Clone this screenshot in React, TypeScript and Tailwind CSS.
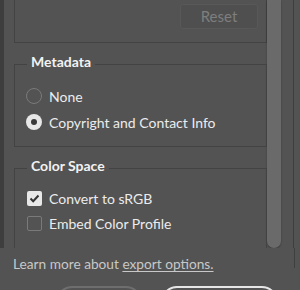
import React from "react";

function Radio({ checked }: { checked?: boolean }) {
  return checked ? (
    <span className="w-[16px] h-[16px] rounded-full bg-[#e8e8e8] flex items-center justify-center shrink-0">
      <span className="w-[6px] h-[6px] rounded-full bg-[#3a3a3a]" />
    </span>
  ) : (
    <span className="w-[16px] h-[16px] rounded-full border border-[#7a7a7a] shrink-0" />
  );
}

function Check({ checked }: { checked?: boolean }) {
  return checked ? (
    <span className="w-[15px] h-[15px] rounded-[2px] bg-[#e8e8e8] flex items-center justify-center shrink-0">
      <svg width="11" height="9" viewBox="0 0 11 9">
        <path d="M1.5 4.5 L4.2 7.2 L9.5 1.5" fill="none" stroke="#333" strokeWidth="2" />
      </svg>
    </span>
  ) : (
    <span className="w-[15px] h-[15px] rounded-[2px] border border-[#7a7a7a] shrink-0" />
  );
}

function Legend({ children }: { children: React.ReactNode }) {
  return (
    <span className="absolute top-[-13px] left-[12px] px-[4px] bg-[#535353] text-[14px] font-bold leading-[20px] text-[#f2f2f2]">
      {children}
    </span>
  );
}

export default function App() {
  return (
    <div
      className="w-[300px] h-[290px] bg-[#535353] overflow-hidden flex flex-col text-[#ececec]"
      style={{ fontFamily: 'Lato, "Noto Sans", sans-serif' }}
    >
      <div className="h-[248px] flex shrink-0 overflow-hidden">
        <div className="w-[4px] bg-[#3e3e3e] shrink-0" />
        <div className="w-[10px] shrink-0" />
        <div className="w-[253px] shrink-0 flex flex-col">
          <div className="h-[43px] shrink-0 border-x border-b border-[#434343] flex justify-end pr-[8px] pt-[4px]">
            <button className="w-[78px] h-[25px] rounded-[3px] bg-[#4f4f4f] border border-[#585858] text-[15px] text-[#7e7e7e] leading-none">
              Reset
            </button>
          </div>
          <div className="relative mt-[21px] shrink-0 h-[83px] border border-[#434343] pl-[11px] pt-[23px]">
            <Legend>Metadata</Legend>
            <div className="flex flex-col gap-[10px]">
              <label className="flex items-center gap-[7px] h-[16px] text-[14px]">
                <Radio />
                <span>None</span>
              </label>
              <label className="flex items-center gap-[7px] h-[16px] text-[14px]">
                <Radio checked />
                <span>Copyright and Contact Info</span>
              </label>
            </div>
          </div>
          <div className="relative mt-[21px] shrink-0 h-[110px] border border-[#434343] pl-[12px] pt-[22px]">
            <Legend>Color Space</Legend>
            <div className="flex flex-col gap-[10px]">
              <label className="flex items-center gap-[7px] h-[15px] text-[14px]">
                <Check checked />
                <span>Convert to sRGB</span>
              </label>
              <label className="flex items-center gap-[7px] h-[15px] text-[14px]">
                <Check />
                <span>Embed Color Profile</span>
              </label>
            </div>
          </div>
        </div>
        <div className="w-[14px] shrink-0 h-[248px] rounded-b-[7px] bg-[#6a6a6a] shadow-[0_1px_2px_rgba(0,0,0,0.3)]" />
        <div className="w-[12px] shrink-0" />
        <div className="w-[1px] shrink-0 bg-[#3f3f3f]" />
      </div>
      <div className="flex">
        <div className="flex-1 pl-[13px] pt-[4px] text-[13.7px] leading-[24px] text-[#c8c8c8]">
          Learn more about <span className="underline underline-offset-2">export options.</span>
        </div>
        <div className="w-[6px] h-[20px] border-l border-[#3f3f3f]" />
      </div>
      <div className="flex pl-[56px] pt-[10px] gap-[19px]">
        <div className="w-[86px] h-[32px] rounded-[16px] border-2 border-[#6e6e6e] shrink-0" />
        <div className="w-[117px] h-[32px] rounded-[16px] border-2 border-[#e6e6e6] shrink-0" />
      </div>
    </div>
  );
}
